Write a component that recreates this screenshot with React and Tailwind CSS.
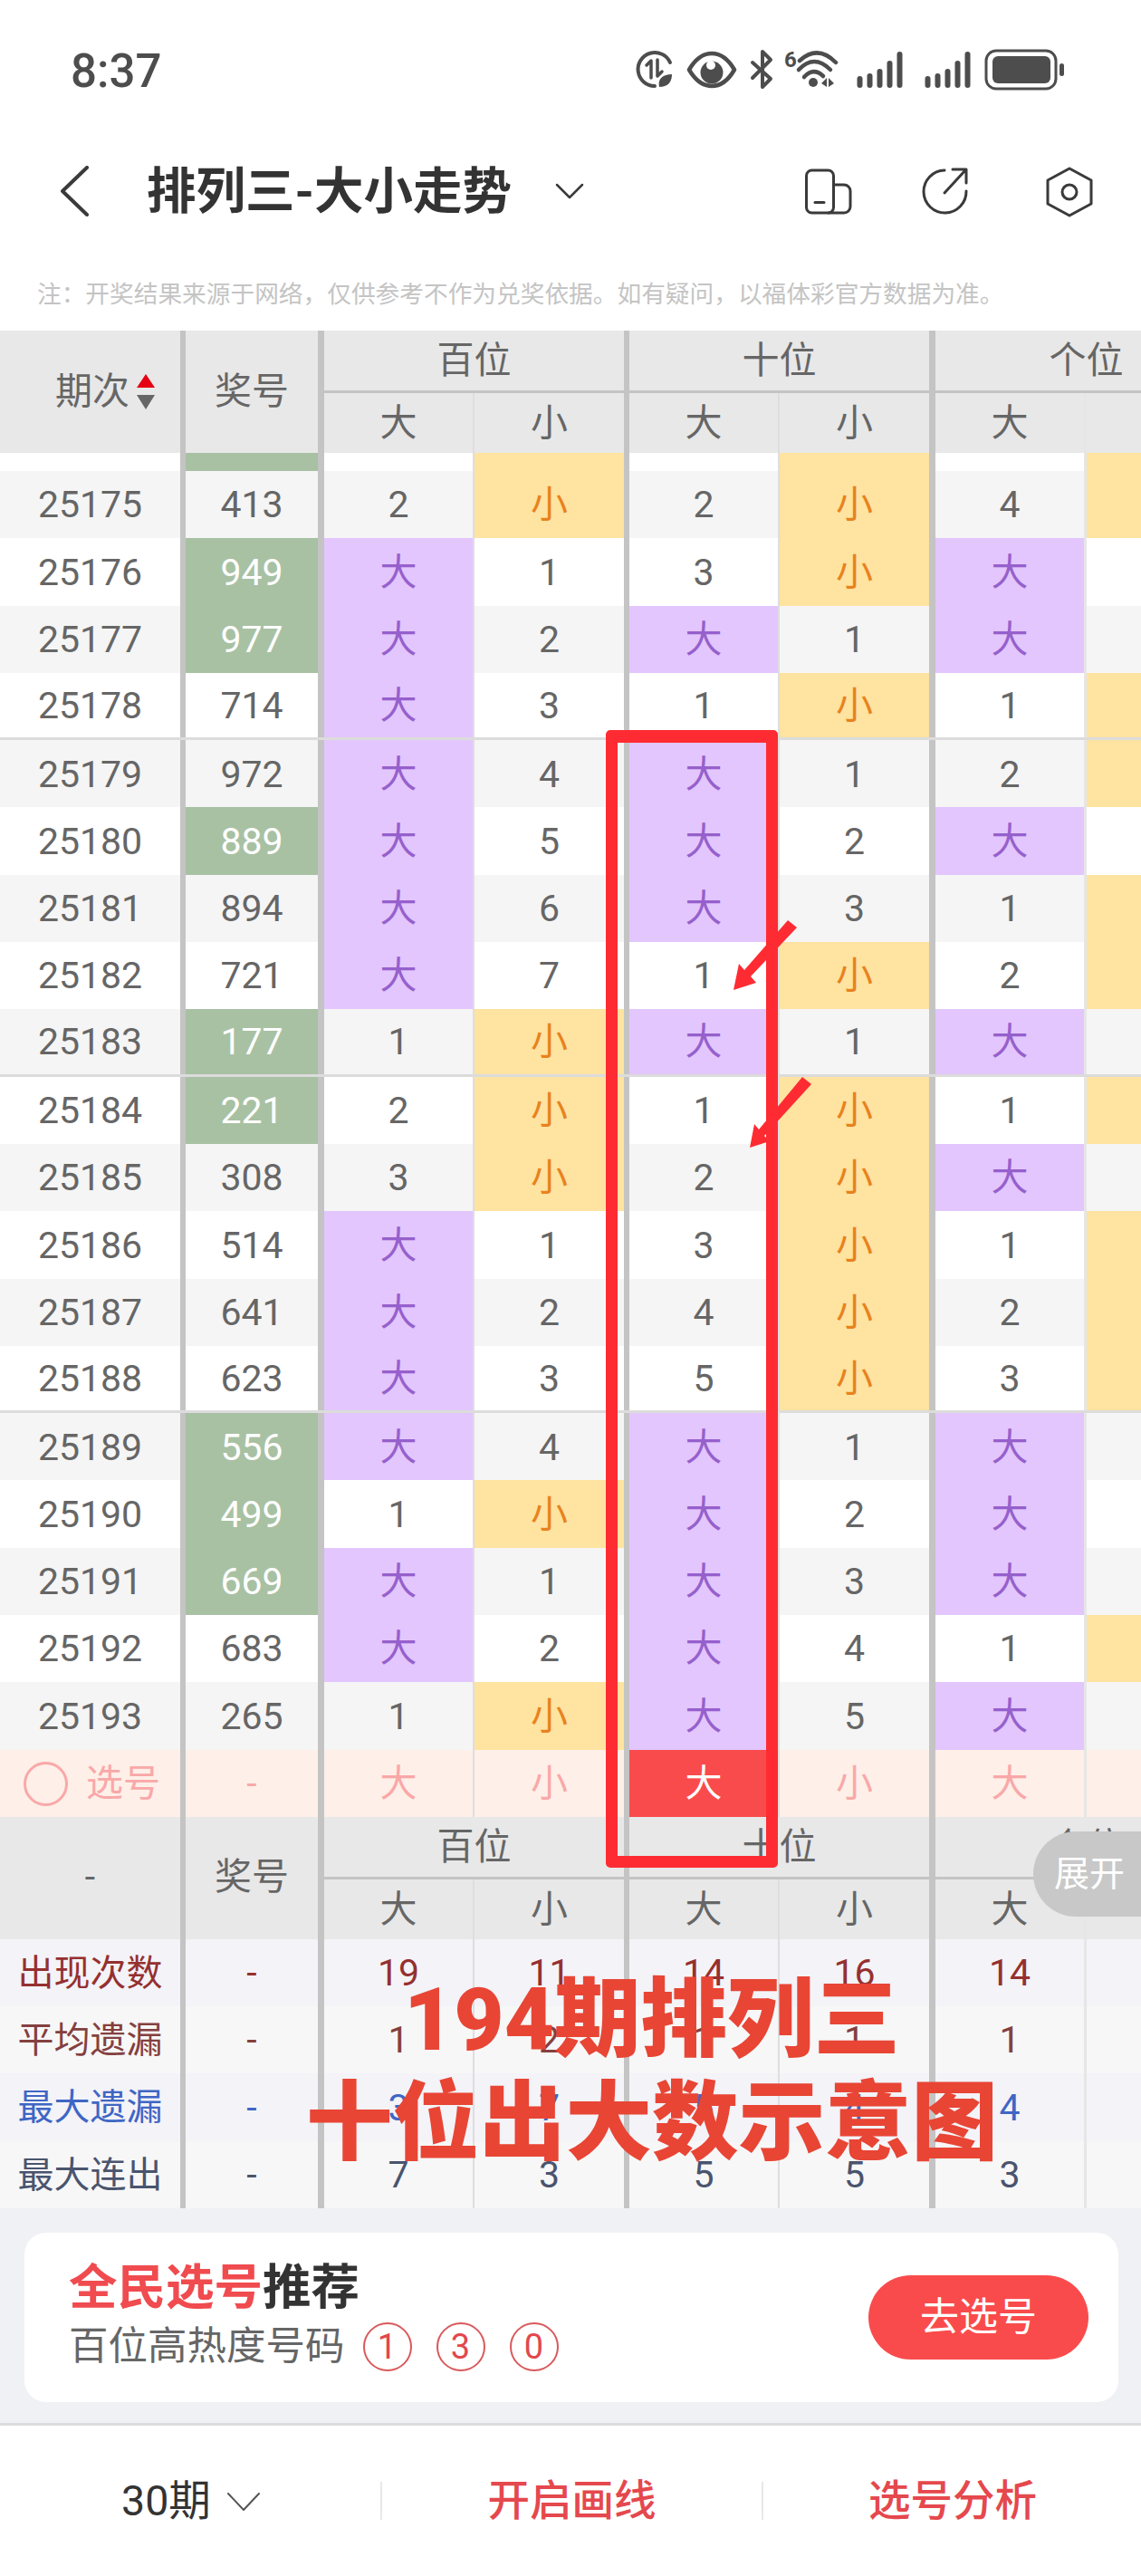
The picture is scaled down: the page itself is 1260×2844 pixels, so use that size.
const COLS = "grid grid-cols-[205px_153px_166px_171px_166px_172px_167px_166px]";

// right edge of every column, thick between groups and thin inside a group
const SEPS = [
  "border-r-[6px] border-[#c4c4c4]",
  "border-r-[7px] border-[#c4c4c4]",
  "border-r-[2px] border-[#dedede]",
  "border-r-[6px] border-[#c4c4c4]",
  "border-r-[2px] border-[#dedede]",
  "border-r-[7px] border-[#c4c4c4]",
  "border-r-[3px] border-[#e6e6e6]",
  "",
];

const ROWS = [
  ["25175", "413", "2", "小", "2", "小", "4", "小"],
  ["25176", "949", "大", "1", "3", "小", "大", ""],
  ["25177", "977", "大", "2", "大", "1", "大", ""],
  ["25178", "714", "大", "3", "1", "小", "1", "小"],
  ["25179", "972", "大", "4", "大", "1", "2", "小"],
  ["25180", "889", "大", "5", "大", "2", "大", ""],
  ["25181", "894", "大", "6", "大", "3", "1", "小"],
  ["25182", "721", "大", "7", "1", "小", "2", "小"],
  ["25183", "177", "1", "小", "大", "1", "大", ""],
  ["25184", "221", "2", "小", "1", "小", "1", "小"],
  ["25185", "308", "3", "小", "2", "小", "大", ""],
  ["25186", "514", "大", "1", "3", "小", "1", "小"],
  ["25187", "641", "大", "2", "4", "小", "2", "小"],
  ["25188", "623", "大", "3", "5", "小", "3", "小"],
  ["25189", "556", "大", "4", "大", "1", "大", ""],
  ["25190", "499", "1", "小", "大", "2", "大", ""],
  ["25191", "669", "大", "1", "大", "3", "大", ""],
  ["25192", "683", "大", "2", "大", "4", "1", "小"],
  ["25193", "265", "1", "小", "大", "5", "大", ""],
];

const STATS = [
  { label: "出现次数", values: ["19", "11", "14", "16", "14"], color: "text-[#95302f]", bg: "bg-[#f3f3f8]" },
  { label: "平均遗漏", values: ["1", "2", "1", "1", "1"], color: "text-[#84403f]", bg: "bg-[#f7f7f7]" },
  { label: "最大遗漏", values: ["3", "7", "5", "4", "4"], color: "text-[#3f66c4]", bg: "bg-[#f3f3f8]" },
  { label: "最大连出", values: ["7", "3", "5", "5", "3"], color: "text-[#4a546e]", bg: "bg-[#f7f7f7]" },
];

const NOTE = "注\uFF1A开奖结果来源于网络\uFF0C仅供参考不作为兑奖依据。如有疑问\uFF0C以福体彩官方数据为准。";

const hasPair = (n) => new Set(n).size < 3;

function Cell({ i, className = "", children }) {
  return (
    <div className={`flex items-center justify-center pt-[2px] ${SEPS[i]} ${className}`}>
      {children}
    </div>
  );
}

function DataRow({ row, index }) {
  const stripe = index % 2 === 0 ? "bg-[#f5f5f5]" : "bg-white";
  const line = index === 3 || index === 8 || index === 13 ? "border-b-[3px] border-[#dcdcdc]" : "";
  return (
    <div className={`${COLS} h-[74.3px] ${line}`}>
      <Cell i={0} className={stripe}>{row[0]}</Cell>
      <Cell i={1} className={hasPair(row[1]) ? "bg-[#a8c1a3] text-white" : stripe}>{row[1]}</Cell>
      {row.slice(2).map((v, j) => {
        let look = stripe;
        if (v === "大") look = "bg-[#e2c6fd] text-[#9660cc]";
        if (v === "小") look = "bg-[#fee3a1] text-[#e8821d]";
        return <Cell key={j} i={j + 2} className={look}>{v}</Cell>;
      })}
    </div>
  );
}

function HeaderBlock({ first, tall }) {
  return (
    <div className={`${COLS} grid-rows-[69px_66px] bg-[#e8e8e8] text-[#666]`}>
      <div className={`row-span-2 ${SEPS[0]} flex items-center ${tall ? "pl-[61px] gap-[8px]" : "justify-center"}`}>
        {first}
      </div>
      <div className={`row-span-2 ${SEPS[1]} flex items-center justify-center`}>奖号</div>
      <div className="col-span-2 flex items-center justify-center pt-[2px] border-b-[3px] border-r-[6px] border-[#c4c4c4]">百位</div>
      <div className="col-span-2 flex items-center justify-center pt-[2px] border-b-[3px] border-r-[7px] border-[#c4c4c4]">十位</div>
      <div className="col-span-2 flex items-center justify-center pt-[2px] border-b-[3px] border-[#c4c4c4]">个位</div>
      {["大", "小", "大", "小", "大", "小"].map((v, j) => (
        <Cell key={j} i={j + 2}>{v}</Cell>
      ))}
    </div>
  );
}

function StatusIcons() {
  return (
    <svg width="480" height="50" viewBox="700 54 480 50" fill="none" stroke="#4d4d4d" strokeLinecap="round" strokeLinejoin="round">
      {/* data saver */}
      <path d="M741 70A18.500 18.500 0 1 0 724 96" strokeWidth="4" />
      <path d="M720 87V68L715 73" strokeWidth="3.500" />
      <path d="M727 67V85M727 85l5-5" strokeWidth="3.500" />
      <path d="M729 97c-2-9 4-14 14-14 0 9-5 14-14 14z" fill="#4d4d4d" stroke="none" />
      {/* eye */}
      <path d="M762 78C776 54 798 54 812 78 798 102 776 102 762 78z" strokeWidth="4.500" />
      <circle cx="787" cy="81" r="12.500" fill="#4d4d4d" stroke="none" />
      <circle cx="786" cy="73" r="5" fill="#fff" stroke="none" />
      {/* bluetooth */}
      <path d="M832 70L852 88 843 97V58L852 67 832 87" strokeWidth="4" />
      <text x="867" y="75" fontSize="24" fontWeight="700" fill="#4d4d4d" stroke="none" fontFamily="Roboto">6</text>
      {/* wifi */}
      <path d="M884 68Q904 50 924 70" strokeWidth="4.500" />
      <path d="M883 78Q900 60 918 78" strokeWidth="4.500" />
      <path d="M889 86Q899 75 910 85" strokeWidth="4.500" />
      <circle cx="899" cy="92" r="5" fill="#4d4d4d" stroke="none" />
      <path d="M908 93l6-6v10zM916 87l6 6-6 4z" fill="#4d4d4d" stroke="none" />
      {/* signal */}
      {[947.5, 1022.5].map((x) => (
        <g key={x} fill="#4d4d4d" stroke="none">
          <rect x={x} y="85" width="6" height="13" rx="3" />
          <rect x={x + 11} y="82" width="6" height="16" rx="3" />
          <rect x={x + 22} y="77" width="6" height="21" rx="3" />
          <rect x={x + 33} y="68" width="6" height="30" rx="3" />
          <rect x={x + 44} y="58" width="6" height="40" rx="3" />
        </g>
      ))}
      {/* battery */}
      <rect x="1090" y="57" width="77" height="42" rx="11" strokeWidth="3" />
      <rect x="1097" y="63" width="64" height="30" rx="6" fill="#4d4d4d" stroke="none" />
      <rect x="1171" y="71" width="5" height="14" rx="2.500" fill="#4d4d4d" stroke="none" />
    </svg>
  );
}

function Arrows() {
  return (
    <svg className="absolute left-[790px] top-[1000px]" width="120" height="290" viewBox="790 1000 120 290" fill="#fe2c32">
      <path d="M870 1016L880 1024 829 1078 835 1085 810 1093 816 1064 822 1071z" />
      <path d="M886 1189L896 1197 844 1254 850 1260 828 1267 833 1241 838 1247z" />
    </svg>
  );
}

export default function App() {
  return (
    <div className="relative w-[1260px] h-[2844px] overflow-hidden bg-white text-[41px] text-[#666] [font-family:Roboto,'Noto_Sans_CJK_SC',sans-serif]">
      {/* status bar */}
      <div className="h-[154px] flex items-center pl-[78px] pr-[81px]">
        <span className="mt-[4px] text-[51px] font-medium text-[#4d4d4d]">8:37</span>
        <div className="ml-auto mt-[2px] flex">
          <StatusIcons />
        </div>
      </div>

      {/* nav */}
      <div className="h-[114px] flex items-center pl-[67px] pr-[53px]">
        <svg width="31" height="56" viewBox="67 183 31 56" fill="none" stroke="#3a3a3a" strokeWidth="4" strokeLinecap="round" strokeLinejoin="round">
          <path d="M96 185L69 211 96 237" />
        </svg>
        <h1 className="ml-[64px] text-[54.500px] leading-none font-bold text-[#333]">排列三-大小走势</h1>
        <svg className="ml-[48px]" width="32" height="18" viewBox="612 201 32 18" fill="none" stroke="#3a3a3a" strokeWidth="2.500" strokeLinecap="round" strokeLinejoin="round">
          <path d="M614 203L628 217 642 203" />
        </svg>
        <div className="ml-auto mt-[2px] flex items-center">
          <svg width="52" height="52" viewBox="891 187 52 52" fill="none" stroke="#3a3a3a" strokeWidth="3" strokeLinecap="round" strokeLinejoin="round">
            <rect x="892.500" y="189" width="30" height="47" rx="6" />
            <path d="M923 205H934a7 7 0 0 1 7 7V229a7 7 0 0 1-7 7H917" />
            <path d="M902 224.500H912" />
          </svg>
          <svg className="ml-[76px]" width="52" height="54" viewBox="1019 186 52 54" fill="none" stroke="#3a3a3a" strokeWidth="3" strokeLinecap="round" strokeLinejoin="round">
            <path d="M1045 189A23.500 23.500 0 1 0 1069 212" />
            <path d="M1045 214L1068 189M1054 188H1069V203" />
          </svg>
          <svg className="ml-[86px]" width="52" height="58" viewBox="1156 183 52 58" fill="none" stroke="#3a3a3a" strokeWidth="3" strokeLinejoin="round">
            <path d="M1182 186L1206 199V225L1182 238 1158 225V199z" />
            <circle cx="1182" cy="212" r="8" />
          </svg>
        </div>
      </div>

      {/* note */}
      <div className="h-[97px] flex items-end pb-[28px] pl-[41px]">
        <p className="text-[26.700px] leading-[24px] text-[#c4c4c4] whitespace-nowrap">{NOTE}</p>
      </div>

      {/* table */}
      <HeaderBlock
        tall
        first={
          <>
            <span>期次</span>
            <span className="flex flex-col gap-[8px]">
              <span className="w-0 h-0 border-x-[10px] border-x-transparent border-b-[15px] border-b-[#e60012]" />
              <span className="w-0 h-0 border-x-[10px] border-x-transparent border-t-[16px] border-t-[#666]" />
            </span>
          </>
        }
      />
      <div className={`${COLS} h-[20px]`}>
        <Cell i={0} className="bg-white" />
        <Cell i={1} className="bg-[#a8c1a3]" />
        <Cell i={2} className="bg-white" />
        <Cell i={3} className="bg-[#fee3a1]" />
        <Cell i={4} className="bg-white" />
        <Cell i={5} className="bg-[#fee3a1]" />
        <Cell i={6} className="bg-white" />
        <Cell i={7} className="bg-[#fee3a1]" />
      </div>
      {ROWS.map((row, i) => (
        <DataRow key={row[0]} row={row} index={i} />
      ))}

      {/* pick row */}
      <div className={`${COLS} h-[74px] bg-[#feefe8] text-[#f9a8a8]`}>
        <Cell i={0} className="gap-[20px] !justify-start pl-[26px]">
          <span className="w-[49px] h-[49px] rounded-full border-[3px] border-[#f9a8a8]" />
          <span>选号</span>
        </Cell>
        <Cell i={1}>-</Cell>
        <Cell i={2}>大</Cell>
        <Cell i={3}>小</Cell>
        <Cell i={4} className="bg-[#fa4b4c] text-white">大</Cell>
        <Cell i={5}>小</Cell>
        <Cell i={6}>大</Cell>
        <Cell i={7}>小</Cell>
      </div>

      <HeaderBlock first="-" />

      {/* stats */}
      {STATS.map((s) => (
        <div key={s.label} className={`${COLS} h-[74.3px] ${s.bg} ${s.color}`}>
          <Cell i={0} className="text-[40px]">{s.label}</Cell>
          <Cell i={1}>-</Cell>
          {s.values.map((v, j) => (
            <Cell key={j} i={j + 2}>{v}</Cell>
          ))}
          <Cell i={7} />
        </div>
      ))}

      {/* recommend card */}
      <div className="h-[240px] bg-[#f0f1f5] border-b-[3px] border-[#dcdcdc] pt-[27px] pl-[27px] pr-[25px]">
        <div className="h-[187px] rounded-[24px] bg-white pl-[49px] pr-[33px] flex items-center justify-between">
          <div>
            <div className="-mt-[2px] text-[53.500px] leading-[60px] font-bold text-[#333]">
              <span className="text-[#f04b4f]">全民选号</span>推荐
            </div>
            <div className="mt-[7px] flex items-center text-[43.500px] leading-[56px] text-[#666]">
              <span>百位高热度号码</span>
              <span className="ml-[20px] flex gap-[27px]">
                {["1", "3", "0"].map((n) => (
                  <span key={n} className="w-[54px] h-[54px] rounded-full border-2 border-[#d9595c] flex items-center justify-center text-[38px] text-[#e2484c]">
                    {n}
                  </span>
                ))}
              </span>
            </div>
          </div>
          <button className="w-[243px] h-[93px] rounded-full bg-[#fa4b4c] text-white text-[43px]">去选号</button>
        </div>
      </div>

      {/* bottom bar */}
      <div className="h-[167px] grid grid-cols-[422px_421px_417px] items-center text-[46.500px]">
        <div className="flex items-center pl-[134px] pt-[2px] text-[#333] h-[42px] border-r-2 border-[#e8e8e8]">
          <span>30期</span>
          <svg className="ml-[18px]" width="36" height="20" viewBox="250 2752 36 20" fill="none" stroke="#555" strokeWidth="2" strokeLinecap="round" strokeLinejoin="round">
            <path d="M251 2753L268 2771 285 2753" />
          </svg>
        </div>
        <div className="flex items-center justify-center pt-[2px] font-medium text-[#e5484d] h-[42px] border-r-2 border-[#e8e8e8]">开启画线</div>
        <div className="flex items-center pl-[116px] pt-[2px] font-medium text-[#e5484d] h-[42px]">选号分析</div>
      </div>

      {/* annotations drawn over the table */}
      <div className="absolute left-[669px] top-[806px] w-[190px] h-[1256px] rounded-[5px] border-[13px] border-t-[14px] border-[#fe2c32]" />
      <Arrows />
      <div className="absolute left-[1141px] top-[2022px] w-[119px] h-[94px] rounded-l-[50px] bg-[#c8c8c8] text-white text-[39px] flex items-center pl-[23px]">展开</div>
      <div className="absolute left-[320px] top-[2173px] w-[800px] text-center text-[95.500px] leading-[114px] font-black text-[#e84535]">
        <p>194期排列三</p>
        <p>十位出大数示意图</p>
      </div>
    </div>
  );
}
